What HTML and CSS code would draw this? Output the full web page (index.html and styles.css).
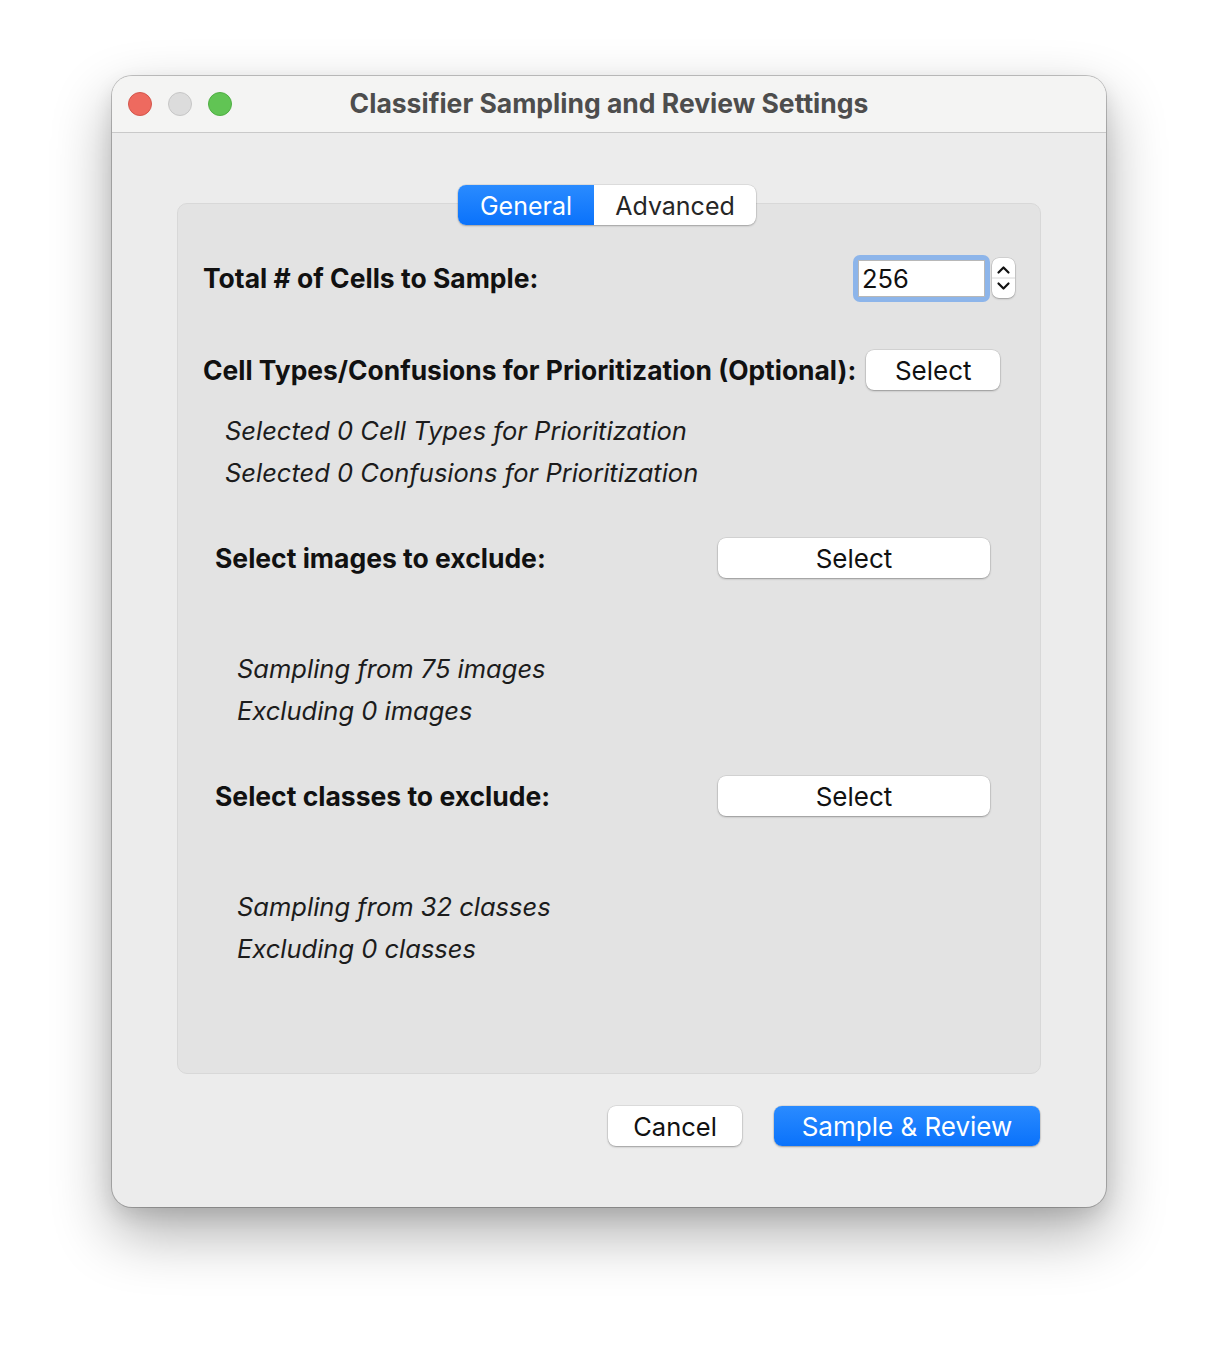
FILE: index.html
```html
<!DOCTYPE html>
<html lang="en">
<head>
    <meta charset="UTF-8">
    <title>Classifier Sampling and Review Settings</title>
    <link rel="stylesheet" href="styles.css">
</head>
<body>
    <div class="window">
        <div class="titlebar">
            <div class="lights">
                <span class="light red"></span>
                <span class="light gray"></span>
                <span class="light green"></span>
            </div>
            <div class="title">Classifier Sampling and Review Settings</div>
            <div></div>
        </div>

        <div class="content">
            <div class="panel">
                <div class="tabs">
                    <div class="tab active">General</div>
                    <div class="tab">Advanced</div>
                </div>

                <div class="row total-row">
                    <div class="label">Total # of Cells to Sample:</div>
                    <div class="spin">
                        <div class="field-ring"><div class="field">256</div></div>
                        <div class="stepper">
                            <svg width="23" height="40" viewBox="0 0 23 40">
                                <path d="M6.5 14.5 L11.5 9.5 L16.5 14.5" fill="none" stroke="#111" stroke-width="2.2" stroke-linecap="round" stroke-linejoin="round"/>
                                <line x1="0" y1="20" x2="23" y2="20" stroke="#d8d8d8" stroke-width="1"/>
                                <path d="M6.5 25.5 L11.5 30.5 L16.5 25.5" fill="none" stroke="#111" stroke-width="2.2" stroke-linecap="round" stroke-linejoin="round"/>
                            </svg>
                        </div>
                    </div>
                </div>

                <div class="row prio-row">
                    <div class="label">Cell Types/Confusions for Prioritization (Optional):</div>
                    <button class="btn small">Select</button>
                </div>
                <div class="notes prio-notes">
                    <div>Selected 0 Cell Types for Prioritization</div>
                    <div>Selected 0 Confusions for Prioritization</div>
                </div>

                <div class="row exclude-row">
                    <div class="label">Select images to exclude:</div>
                    <button class="btn wide">Select</button>
                </div>
                <div class="notes exclude-notes">
                    <div>Sampling from 75 images</div>
                    <div>Excluding 0 images</div>
                </div>

                <div class="row exclude-row">
                    <div class="label">Select classes to exclude:</div>
                    <button class="btn wide">Select</button>
                </div>
                <div class="notes exclude-notes">
                    <div>Sampling from 32 classes</div>
                    <div>Excluding 0 classes</div>
                </div>
            </div>

            <div class="actions">
                <button class="btn cancel">Cancel</button>
                <button class="btn primary">Sample &amp; Review</button>
            </div>
        </div>
    </div>
</body>
</html>
```

FILE: styles.css
```css
body {
    margin: 0;
    padding: 76px 0 149px;
    background: #ffffff;
    font-family: Inter, "Liberation Sans", Arial, sans-serif;
    color: #1c1c1c;
}
.window {
    width: 994px;
    margin: 0 auto;
    background: #ececec;
    border-radius: 20px;
    box-shadow: 0 0 0 1px rgba(0,0,0,0.22), 0 26px 60px rgba(0,0,0,0.32), 0 8px 20px rgba(0,0,0,0.1);
    overflow: hidden;
}
.titlebar {
    height: 56px;
    background: #f4f4f3;
    border-bottom: 1px solid #c9c9c9;
    display: grid;
    grid-template-columns: 1fr auto 1fr;
    align-items: center;
}
.lights {
    display: flex;
    gap: 16px;
    padding-left: 16px;
}
.light {
    width: 22px;
    height: 22px;
    border-radius: 50%;
    border: 1px solid;
}
.red {
    background: #ee6a5f;
    border-color: #d3564c;
}
.gray {
    background: #dcdcdc;
    border-color: #c6c6c6;
}
.green {
    background: #61c454;
    border-color: #4fae43;
}
.title {
    font-size: 26.5px;
    font-weight: 700;
    color: #4d4d4d;
    margin-top: -2px;
}
.content {
    padding: 70px 65px 61px;
}
.panel {
    background: #e3e3e3;
    border: 1px solid #d8d8d8;
    border-radius: 10px;
    height: 871px;
    box-sizing: border-box;
}
.tabs {
    display: flex;
    width: 298px;
    height: 40px;
    margin: -19px 0 0 280px;
    background: #fff;
    border-radius: 8px;
    box-shadow: 0 0 0 0.5px rgba(0,0,0,0.12), 0 1px 2px rgba(0,0,0,0.25);
    overflow: hidden;
    font-size: 25px;
}
.tab {
    display: flex;
    align-items: center;
    justify-content: center;
    color: #262626;
    width: 162px;
    padding-top: 2px;
}
.tab.active {
    width: 136px;
    color: #fff;
    background: linear-gradient(#2a8bff, #0a72fb);
}
.row {
    display: flex;
    align-items: center;
}
.label {
    font-size: 26.5px;
    font-weight: 700;
    color: #111;
}
.total-row {
    height: 50px;
    margin-top: 28px;
    padding: 0 25px;
    justify-content: space-between;
}
.spin {
    display: flex;
    align-items: center;
    gap: 2px;
}
.field-ring {
    padding: 5px;
    border-radius: 7px;
    background: #8db5ea;
}
.field {
    width: 127px;
    height: 37px;
    box-sizing: border-box;
    background: #fff;
    border: 1px solid #b8b8b8;
    font-size: 25.5px;
    line-height: 35px;
    padding-left: 3px;
    color: #111;
}
.stepper {
    width: 23px;
    height: 40px;
    background: #fff;
    border-radius: 7px;
    box-shadow: 0 0 0 0.5px rgba(0,0,0,0.15), 0 1px 2px rgba(0,0,0,0.25);
    overflow: hidden;
}
.stepper svg {
    display: block;
}
.btn {
    font-family: inherit;
    font-size: 26px;
    height: 40px;
    border: none;
    border-radius: 8px;
    background: #fff;
    color: #111;
    box-shadow: 0 0 0 0.5px rgba(0,0,0,0.12), 0 1px 2px rgba(0,0,0,0.3);
    padding: 0;
}
.prio-row {
    margin-top: 47px;
    padding-left: 25px;
}
.prio-row .label {
    font-size: 26.4px;
}
.btn.small {
    width: 134px;
    margin-left: 10px;
}
.notes {
    font-size: 25.5px;
    font-style: italic;
    line-height: 42px;
    color: #1c1c1c;
}
.prio-notes {
    margin-top: 20px;
    padding-left: 47px;
}
.exclude-row {
    margin-top: 44px;
    padding-left: 37px;
    display: grid;
    grid-template-columns: 503px 272px;
}
.exclude-notes {
    margin-top: 70px;
    padding-left: 59px;
}
.actions {
    display: flex;
    justify-content: flex-end;
    gap: 32px;
    margin-top: 32px;
    padding-right: 1px;
}
.btn.cancel {
    width: 134px;
    font-size: 25.5px;
}
.btn.primary {
    width: 266px;
    font-size: 26px;
    color: #fff;
    background: linear-gradient(#2a8bff, #0a72fb);
}
```
